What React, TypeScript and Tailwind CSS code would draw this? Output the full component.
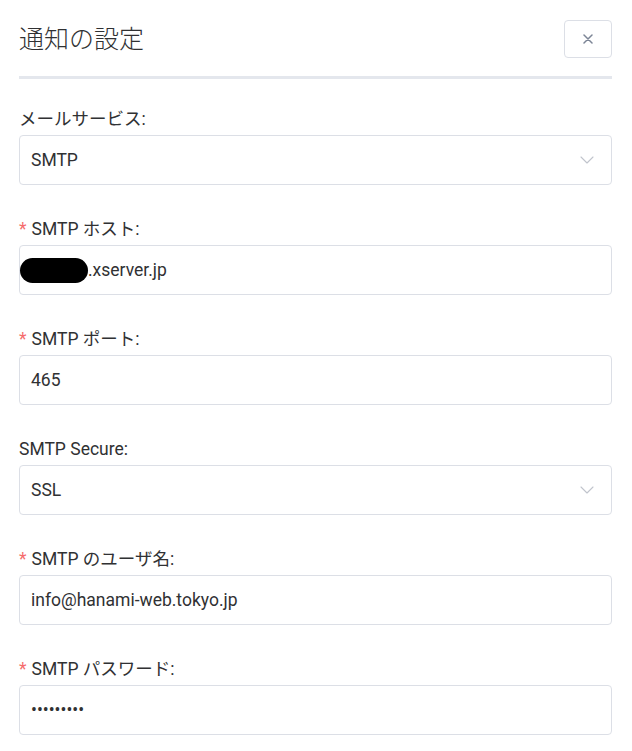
import React from 'react'

type Field = {
  label: string
  required?: boolean
  kind: 'select' | 'input' | 'host' | 'password'
  value: string
}

const FIELDS: Field[] = [
  { label: 'メールサービス:', kind: 'select', value: 'SMTP' },
  { label: 'SMTP ホスト:', required: true, kind: 'host', value: '.xserver.jp' },
  { label: 'SMTP ポート:', required: true, kind: 'input', value: '465' },
  { label: 'SMTP Secure:', kind: 'select', value: 'SSL' },
  { label: 'SMTP のユーザ名:', required: true, kind: 'input', value: 'info@hanami-web.tokyo.jp' },
  { label: 'SMTP パスワード:', required: true, kind: 'password', value: '•••••••••' },
]

function Chevron() {
  return (
    <svg width="14" height="8" viewBox="0 0 14 8" fill="none" className="shrink-0">
      <path d="M1 1l6 6 6-6" stroke="#c0c4cc" strokeWidth="1.1" strokeLinecap="round" strokeLinejoin="round" />
    </svg>
  )
}

function FormRow({ field }: { field: Field }) {
  return (
    <div className="mb-8">
      <label className="flex h-6 items-center text-[17.5px] text-[#303133]">
        {field.required && <span className="mr-[5px] text-[#f56c6c]">*</span>}
        {field.label}
      </label>
      <div className="mt-1 flex h-[50px] items-center rounded-[4px] border border-[#dcdfe6] bg-white pr-[17px] text-[17.5px] text-[#303133]">
        {field.kind === 'host' ? (
          <span className="flex items-center">
            <span className="inline-block h-[25px] w-[68px] rounded-full bg-black" />
            <span>{field.value}</span>
          </span>
        ) : (
          <span className="pl-[11px]">{field.value}</span>
        )}
        {field.kind === 'select' && (
          <>
            <span className="flex-1" />
            <Chevron />
          </>
        )}
      </div>
    </div>
  )
}

export default function App() {
  return (
    <div
      className="min-h-screen bg-white pl-[19px] pr-[20px]"
      style={{ fontFamily: 'Roboto, "Noto Sans CJK JP", sans-serif' }}
    >
      <div className="flex items-center justify-between pt-5">
        <h1 className="text-[25px] font-light leading-none text-[#303133]">通知の設定</h1>
        <button className="flex h-[38px] w-[48px] items-center justify-center rounded-[4px] border border-[#dcdfe6] bg-white">
          <svg width="10" height="10" viewBox="0 0 10 10">
            <path d="M1 1l8 8M9 1l-8 8" stroke="#7c8596" strokeWidth="1.5" strokeLinecap="round" />
          </svg>
        </button>
      </div>
      <div className="mt-[18px] h-[3px] bg-[#e4e7ed]" />
      <form className="pt-7">
        {FIELDS.map((f) => (
          <FormRow key={f.label} field={f} />
        ))}
      </form>
    </div>
  )
}
